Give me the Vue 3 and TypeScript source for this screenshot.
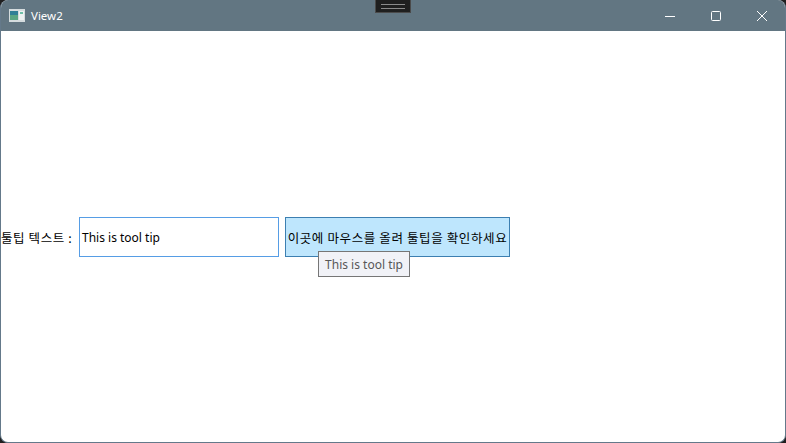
<script setup lang="ts">
const title: string = 'View2'
const label: string = '툴팁 텍스트 :'
const value: string = 'This is tool tip'
const action: string = '이곳에 마우스를 올려 툴팁을 확인하세요'
</script>

<template>
  <div class="desk">
    <div class="window">
      <header class="titlebar">
        <svg class="app-icon" width="16" height="14" viewBox="0 0 16 14">
          <rect x="0" y="0" width="16" height="13" fill="#d5dcde" />
          <rect x="1" y="2" width="8" height="9" fill="#2f7f96" />
          <rect x="1" y="6" width="8" height="5" fill="#5aa583" />
          <rect x="10" y="2" width="5" height="9" fill="#eef2f2" />
          <rect x="11" y="3" width="3" height="2" fill="#6fc0a8" />
        </svg>
        <span class="title">{{ title }}</span>
        <div class="controls">
          <div class="control">
            <svg width="12" height="12" viewBox="0 0 12 12"><path d="M1 6.5h10" stroke="#fff" fill="none" /></svg>
          </div>
          <div class="control">
            <svg width="12" height="12" viewBox="0 0 12 12"><rect x="1.5" y="1.5" width="9" height="9" rx="1" stroke="#fff" fill="none" /></svg>
          </div>
          <div class="control">
            <svg width="12" height="12" viewBox="0 0 12 12"><path d="M1 1l10 10M11 1L1 11" stroke="#fff" fill="none" /></svg>
          </div>
        </div>
        <div class="grip"><span></span></div>
      </header>
      <main class="content">
        <div class="row">
          <span class="label">{{ label }}</span>
          <div class="input">{{ value }}</div>
          <div class="button">
            <span class="action">{{ action }}</span>
            <div class="tooltip">{{ value }}</div>
          </div>
        </div>
      </main>
    </div>
  </div>
</template>

<style>
html, body { margin: 0; background: #1f1f1f; overflow: hidden; }
</style>

<style scoped>
.desk {
  width: 786px;
  height: 443px;
  background: #1f1f1f;
  font-family: "Noto Sans CJK KR", "Noto Sans", sans-serif;
  font-size: 12px;
  color: #000;
}
.window {
  position: relative;
  box-sizing: border-box;
  width: 786px;
  height: 443px;
  display: flex;
  flex-direction: column;
  border: 1px solid #64798a;
  border-top: 0;
  border-radius: 8px;
  overflow: hidden;
  background: #fff;
}
.titlebar {
  height: 31px;
  flex: none;
  display: flex;
  align-items: center;
  background: #627682;
  color: #fff;
  padding-left: 8px;
}
.app-icon { margin-right: 6px; }
.title {
  font-family: "Noto Sans", sans-serif;
  font-size: 11.5px;
}
.controls {
  margin-left: auto;
  display: flex;
}
.control {
  width: 46px;
  height: 31px;
  display: flex;
  align-items: center;
  justify-content: center;
}
.grip {
  position: absolute;
  left: 374px;
  top: 0;
  box-sizing: border-box;
  width: 36px;
  height: 13px;
  background: #1f1f1f;
  border: 1px solid #4a4a4a;
  border-top: 0;
  display: flex;
  align-items: center;
  justify-content: center;
}
.grip span {
  display: block;
  width: 24px;
  height: 3px;
  border-top: 1px solid #8a8a8a;
  border-bottom: 1px solid #8a8a8a;
}
.content {
  flex: 1;
  display: flex;
  align-items: center;
}
.row {
  display: flex;
  align-items: stretch;
  height: 40px;
  margin-top: 1px;
}
.label {
  display: flex;
  align-items: center;
  width: 78px;
  white-space: nowrap;
  font-size: 12.5px;
  letter-spacing: 0.6px;
}
.input {
  box-sizing: border-box;
  width: 200px;
  display: flex;
  align-items: center;
  padding-left: 2px;
  border: 1px solid #569de5;
  font-family: "Noto Sans", sans-serif;
}
.button {
  position: relative;
  box-sizing: border-box;
  width: 225px;
  margin-left: 6px;
  display: flex;
  align-items: center;
  justify-content: center;
  white-space: nowrap;
  background: #bee6fd;
  border: 1px solid #3c7fb1;
}
.action {
  font-size: 12.5px;
  letter-spacing: 0.62px;
}
.tooltip {
  position: absolute;
  left: 32px;
  top: 33px;
  box-sizing: border-box;
  width: 92px;
  height: 26px;
  display: flex;
  align-items: center;
  justify-content: center;
  background: #f1f2f7;
  border: 1px solid #767676;
  color: #575757;
  font-family: "Noto Sans", sans-serif;
}
</style>
